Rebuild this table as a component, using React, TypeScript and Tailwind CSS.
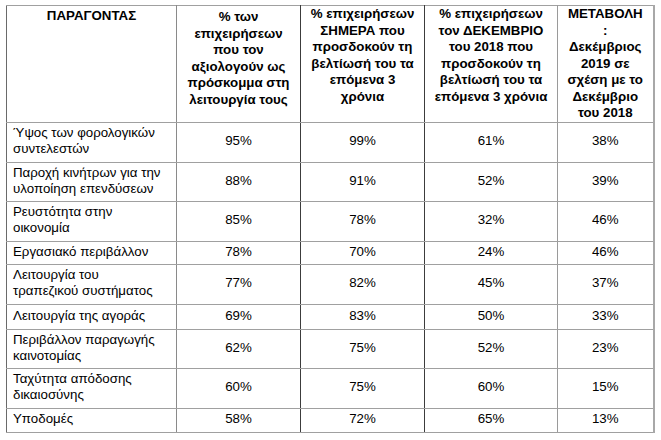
const header: { lines: string[]; pad: string }[] = [
  { lines: ["ΠΑΡΑΓΟΝΤΑΣ"], pad: "pt-[2px]" },
  {
    lines: ["% των", "επιχειρήσεων", "που τον", "αξιολογούν ως", "πρόσκομμα στη", "λειτουργία τους"],
    pad: "pt-[3px]",
  },
  {
    lines: ["% επιχειρήσεων", "ΣΗΜΕΡΑ που", "προσδοκούν τη", "βελτίωσή του τα", "επόμενα 3", "χρόνια"],
    pad: "pt-0",
  },
  {
    lines: ["% επιχειρήσεων", "τον ΔΕΚΕΜΒΡΙΟ", "του 2018 που", "προσδοκούν τη", "βελτίωσή του τα", "επόμενα 3 χρόνια"],
    pad: "pt-0",
  },
  {
    lines: ["ΜΕΤΑΒΟΛΗ", ":", "Δεκέμβριος", "2019 σε", "σχέση με το", "Δεκέμβριο", "του 2018"],
    pad: "pt-0",
  },
]

const rows: { label: string[]; values: string[]; h: string }[] = [
  { label: ["Ύψος των φορολογικών", "συντελεστών"], values: ["95%", "99%", "61%", "38%"], h: "h-[40px]" },
  { label: ["Παροχή κινήτρων για την", "υλοποίηση επενδύσεων"], values: ["88%", "91%", "52%", "39%"], h: "h-[39px]" },
  { label: ["Ρευστότητα στην", "οικονομία"], values: ["85%", "78%", "32%", "46%"], h: "h-[40px]" },
  { label: ["Εργασιακό περιβάλλον"], values: ["78%", "70%", "24%", "46%"], h: "h-[23px]" },
  { label: ["Λειτουργία του", "τραπεζικού συστήματος"], values: ["77%", "82%", "45%", "37%"], h: "h-[40px]" },
  { label: ["Λειτουργία της αγοράς"], values: ["69%", "83%", "50%", "33%"], h: "h-[25px]" },
  { label: ["Περιβάλλον παραγωγής", "καινοτομίας"], values: ["62%", "75%", "52%", "23%"], h: "h-[39px]" },
  { label: ["Ταχύτητα απόδοσης", "δικαιοσύνης"], values: ["60%", "75%", "60%", "15%"], h: "h-[40px]" },
  { label: ["Υποδομές"], values: ["58%", "72%", "65%", "13%"], h: "h-[24px]" },
]

// right-hand border of each column, the scan has darker lines in the middle
const colBorder = [
  "border-r-[#8a8a8a]",
  "border-r-[#3c3c3c]",
  "border-r-[#3c3c3c]",
  "border-r-[#9a9a9a]",
  "border-r-[#a8a8a8] border-r-2",
]

const widths = ["w-[170px]", "w-[124px]", "w-[124px]", "w-[133px]", "w-[96px]"]

export default function App() {
  return (
    <div className="min-h-[440px] w-[661px] bg-white pl-[6px] pt-[5px] font-['Liberation_Sans',Arial,sans-serif] text-[13.3px] text-black">
      <table className="w-[647px] table-fixed border-collapse border-l border-t border-l-[#6a6a6a] border-t-[#a0a0a0]">
        <colgroup>
          {widths.map((w, i) => (
            <col key={i} className={w} />
          ))}
        </colgroup>
        <thead>
          <tr>
            {header.map((c, i) => (
              <th
                key={i}
                className={`h-[117px] border-b border-r border-b-[#a0a0a0] ${colBorder[i]} ${c.pad} px-1 text-center align-top font-bold leading-[16.5px]`}
              >
                {c.lines.map((l, j) => (
                  <div key={j} className="whitespace-nowrap">
                    {l}
                  </div>
                ))}
              </th>
            ))}
          </tr>
        </thead>
        <tbody>
          {rows.map((r, i) => (
            <tr key={i}>
              <td
                className={`${r.h} border-b border-r border-b-[#a0a0a0] ${colBorder[0]} pb-[3px] pl-[6px] align-middle leading-[16px]`}
              >
                {r.label.map((l, j) => (
                  <div key={j} className="whitespace-nowrap">
                    {l}
                  </div>
                ))}
              </td>
              {r.values.map((v, j) => (
                <td
                  key={j}
                  className={`${r.h} border-b border-r border-b-[#a0a0a0] ${colBorder[j + 1]} pb-[3px] text-center align-middle leading-[16px]`}
                >
                  {v}
                </td>
              ))}
            </tr>
          ))}
        </tbody>
      </table>
    </div>
  )
}
